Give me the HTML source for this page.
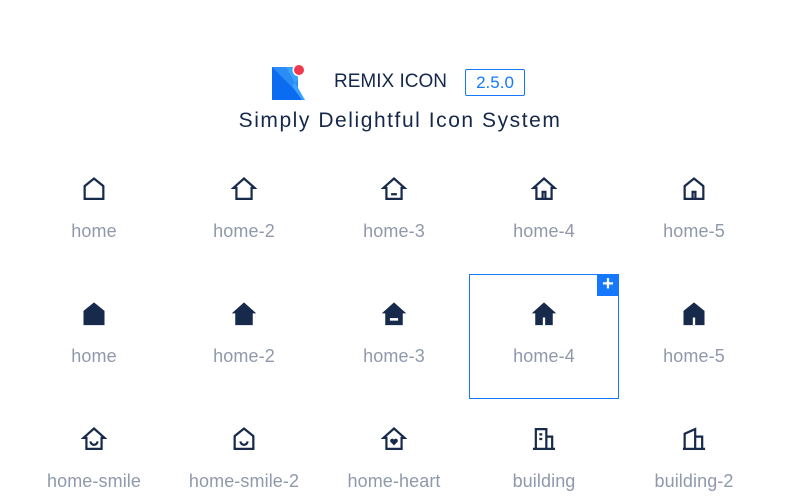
<!DOCTYPE html>
<html><head><meta charset="utf-8"><style>
*{margin:0;padding:0;box-sizing:border-box}
body{width:800px;height:500px;background:#fff;font-family:"Liberation Sans",sans-serif;position:relative;overflow:hidden}
.t{position:absolute;color:#15284a}
.cell{position:absolute;width:150px;text-align:center}
.cell svg{position:absolute;left:61px;width:28px;height:28px}
.cell span{position:absolute;left:0;width:150px;font-size:18px;color:#8f99ab;letter-spacing:0.1px}
svg .s{fill:none;stroke:#172a4b;stroke-width:1.9;stroke-linejoin:miter}
svg .f{fill:#172a4b}
</style></head><body>
<svg style="position:absolute;left:272px;top:64px" width="36" height="38" viewBox="0 0 36 38">
<polygon points="0,3 26,3 26,36 0,36" fill="#2b8cf6"/>
<polygon points="0,3 33,36 0,36" fill="#0a6cf0"/>
<polygon points="14,3 26,3 26,16 20,22 30,36 33,36" fill="#3aa2ff"/>
<circle cx="27" cy="6" r="6.5" fill="#fff"/>
<circle cx="27" cy="6" r="5" fill="#f0384e"/>
</svg>
<div class="t" style="left:334px;top:71px;font-size:19px">REMIX ICON</div>
<div style="position:absolute;left:465px;top:69px;width:60px;height:27px;border:1px solid #1677ff;border-radius:2px;color:#1677ff;font-size:17px;text-align:center;line-height:25px">2.5.0</div>
<div class="t" style="left:0;width:800px;text-align:center;top:109px;font-size:21px;letter-spacing:1.55px">Simply Delightful Icon System</div>

<div style="position:absolute;left:469px;top:274px;width:150px;height:125px;border:1px solid #1677ff"></div>
<div style="position:absolute;left:597px;top:274px;width:22px;height:22px;background:#1677ff;color:#fff;font-size:20px;font-weight:bold;text-align:center;line-height:21px">+</div>

<!-- row 1 -->
<div class="cell" style="left:19px;top:175px"><svg viewBox="0 0 24 24"><path class="s" d="M4 20.5V9.5L12 3l8 6.5v11z"/></svg><span style="top:46px">home</span></div>
<div class="cell" style="left:169px;top:175px"><svg viewBox="0 0 24 24"><path class="s" d="M5.5 20.5v-9.5H3L12 3l9 8h-2.5v9.5z"/></svg><span style="top:46px">home-2</span></div>
<div class="cell" style="left:319px;top:175px"><svg viewBox="0 0 24 24"><path class="s" d="M5.5 20.5v-9.5H3L12 3l9 8h-2.5v9.5z M9.5 16.5h5"/></svg><span style="top:46px">home-3</span></div>
<div class="cell" style="left:469px;top:175px"><svg viewBox="0 0 24 24"><path class="s" d="M5.5 20.5v-9.5H3L12 3l9 8h-2.5v9.5z M10.8 20.5v-6h2.4v6"/></svg><span style="top:46px">home-4</span></div>
<div class="cell" style="left:619px;top:175px"><svg viewBox="0 0 24 24"><path class="s" d="M4 20.5V9.5L12 3l8 6.5v11z M10.8 20.5v-6h2.4v6"/></svg><span style="top:46px">home-5</span></div>

<!-- row 2 -->
<div class="cell" style="left:19px;top:300px"><svg viewBox="0 0 24 24"><path class="f" d="M3 21.5V9.3L12 2l9 7.3v12.2z"/></svg><span style="top:46px">home</span></div>
<div class="cell" style="left:169px;top:300px"><svg viewBox="0 0 24 24"><path class="f" d="M4.5 21.5v-10H1.5L12 2l10.5 9.5h-3v10z"/></svg><span style="top:46px">home-2</span></div>
<div class="cell" style="left:319px;top:300px"><svg viewBox="0 0 24 24"><path class="f" d="M4.5 21.5v-10H1.5L12 2l10.5 9.5h-3v10z"/><rect x="8.5" y="15.5" width="7" height="2.2" fill="#fff"/></svg><span style="top:46px">home-3</span></div>
<div class="cell" style="left:469px;top:300px"><svg viewBox="0 0 24 24"><path class="f" d="M4.5 21.5v-10H1.5L12 2l10.5 9.5h-3v10z"/><rect x="11" y="15" width="2" height="6.5" fill="#fff"/></svg><span style="top:46px">home-4</span></div>
<div class="cell" style="left:619px;top:300px"><svg viewBox="0 0 24 24"><path class="f" d="M3 21.5V9.3L12 2l9 7.3v12.2z"/><rect x="11" y="15" width="2" height="6.5" fill="#fff"/></svg><span style="top:46px">home-5</span></div>

<!-- row 3 -->
<div class="cell" style="left:19px;top:425px"><svg viewBox="0 0 24 24"><path class="s" d="M5.5 20.5v-9.5H3L12 3l9 8h-2.5v9.5z M9 14a3 3 0 0 0 6 0"/></svg><span style="top:46px">home-smile</span></div>
<div class="cell" style="left:169px;top:425px"><svg viewBox="0 0 24 24"><path class="s" d="M4 20.5V9.5L12 3l8 6.5v11z M9 14a3 3 0 0 0 6 0"/></svg><span style="top:46px">home-smile-2</span></div>
<div class="cell" style="left:319px;top:425px"><svg viewBox="0 0 24 24"><path class="s" d="M5.5 20.5v-9.5H3L12 3l9 8h-2.5v9.5z"/><path class="f" d="M12 17.5l-3-3a1.7 1.7 0 0 1 3-2 1.7 1.7 0 0 1 3 2z"/></svg><span style="top:46px">home-heart</span></div>
<div class="cell" style="left:469px;top:425px"><svg viewBox="0 0 24 24"><path class="s" d="M2.5 20.5h19 M5 20.5V3.5h9v17 M14 10h5v10.5 M8 8h2.5 M8 12h2.5"/></svg><span style="top:46px">building</span></div>
<div class="cell" style="left:619px;top:425px"><svg viewBox="0 0 24 24"><path class="s" d="M2.5 20.5h19 M4 20.5V7.5L13 3.5v17 M13 10h6v10.5"/></svg><span style="top:46px">building-2</span></div>
</body></html>
